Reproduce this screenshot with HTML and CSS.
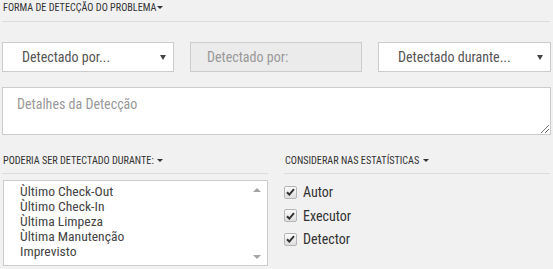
FILE: index.html
```html
<!DOCTYPE html>
<html lang="pt">
<head>
<meta charset="utf-8">
<link rel="stylesheet" href="styles.css">
</head>
<body>
<div class="page">
  <div class="section-title">FORMA DE DETECÇÃO DO PROBLEMA<span class="caret"></span></div>
  <div class="rule"></div>
  <div class="row3">
    <div class="select"><span>Detectado por...</span><span class="arrow"></span></div>
    <div class="input disabled">Detectado por:</div>
    <div class="select"><span>Detectado durante...</span><span class="arrow"></span></div>
  </div>
  <div class="textarea">
    <span class="placeholder">Detalhes da Detecção</span>
    <svg class="grip" width="9" height="9" viewBox="0 0 9 9"><g fill="#777"><rect x="8" y="1" width="1" height="1"/><rect x="7" y="2" width="1" height="1"/><rect x="6" y="3" width="1" height="1"/><rect x="5" y="4" width="1" height="1"/><rect x="4" y="5" width="1" height="1"/><rect x="3" y="6" width="1" height="1"/><rect x="2" y="7" width="1" height="1"/><rect x="1" y="8" width="1" height="1"/><rect x="8" y="5" width="1" height="1"/><rect x="7" y="6" width="1" height="1"/><rect x="6" y="7" width="1" height="1"/><rect x="5" y="8" width="1" height="1"/></g></svg>
  </div>
  <div class="row2">
    <div class="col">
      <div class="section-title">PODERIA SER DETECTADO DURANTE: <span class="caret"></span></div>
      <div class="rule"></div>
      <div class="listbox">
        <div class="item">Ùltimo Check-Out</div>
        <div class="item">Ùltimo Check-In</div>
        <div class="item">Ùltima Limpeza</div>
        <div class="item">Ùltima Manutenção</div>
        <div class="item">Imprevisto</div>
        <span class="sb-up"></span>
        <span class="sb-down"></span>
      </div>
    </div>
    <div class="col">
      <div class="section-title">CONSIDERAR NAS ESTATÍSTICAS <span class="caret"></span></div>
      <div class="rule"></div>
      <div class="checks">
        <label class="check"><span class="box"><svg width="9" height="8" viewBox="0 0 9 8"><path d="M1 4.2 L3.3 6.6 L8 1.2" fill="none" stroke="#333" stroke-width="2"/></svg></span>Autor</label>
        <label class="check"><span class="box"><svg width="9" height="8" viewBox="0 0 9 8"><path d="M1 4.2 L3.3 6.6 L8 1.2" fill="none" stroke="#333" stroke-width="2"/></svg></span>Executor</label>
        <label class="check"><span class="box"><svg width="9" height="8" viewBox="0 0 9 8"><path d="M1 4.2 L3.3 6.6 L8 1.2" fill="none" stroke="#333" stroke-width="2"/></svg></span>Detector</label>
      </div>
    </div>
  </div>
</div>
</body>
</html>
```

FILE: styles.css
```css
* { box-sizing: border-box; }
html, body { margin: 0; padding: 0; background: #f1f1f1; }
body { font-family: "Roboto Condensed", Roboto, "Liberation Sans", Arial, sans-serif; color: #333; }
.page { width: 553px; height: 269px; padding: 3px 3px 0 2px; overflow: hidden; }
.section-title {
  font-size: 10.2px; line-height: 10px; color: #333;
  height: 10px; white-space: nowrap; padding-left: 1px;
}
.caret {
  display: inline-block; width: 0; height: 0; vertical-align: 2px; margin-left: 1px;
  border-left: 3px solid transparent; border-right: 3px solid transparent; border-top: 3px solid #333;
}
.rule { height: 1px; background: #dcdcdc; margin-top: 8px; }
.row3 {
  display: grid; grid-template-columns: 172px 172px 173px; column-gap: 16px;
  margin-top: 20px;
}
.select, .input {
  height: 30px; border: 1px solid #ccc; background: #fff; font-size: 14px; color: #555;
  display: flex; align-items: center;
}
.select { position: relative; padding-left: 19px; }
.select .arrow {
  position: absolute; right: 7px; top: 12px; width: 0; height: 0;
  border-left: 3px solid transparent; border-right: 3px solid transparent; border-top: 5px solid #444;
}
.input.disabled { background: #ebebeb; color: #999; padding-left: 16px; }
.textarea {
  position: relative; margin-top: 15px; height: 48px; width: 549px;
  border: 1px solid #ccc; background: #fff; padding: 6px 14px;
}
.placeholder { font-size: 14px; color: #999; }
.grip { position: absolute; right: 1px; bottom: 1px; }
.row2 { display: grid; grid-template-columns: 266px 266px; column-gap: 16px; margin-top: 21px; }
.row2 .rule { margin-top: 7px; }
.listbox {
  position: relative; margin-top: 6px; margin-left: 1px; height: 86px; border: 1px solid #ccc;
  background: #fff; padding: 3px 0 0 16px;
}
.item { font-size: 13.6px; line-height: 15px; color: #444; }
.sb-up, .sb-down {
  position: absolute; right: 6px; width: 0; height: 0;
  border-left: 4px solid transparent; border-right: 4px solid transparent;
}
.sb-up { top: 7px; border-bottom: 4px solid #a3a3a3; }
.sb-down { bottom: 6px; border-top: 4px solid #a3a3a3; }
.checks { padding-top: 11px; display: flex; flex-direction: column; gap: 9.5px; }
.check { display: flex; align-items: center; font-size: 14px; line-height: 14px; color: #333; }
.box {
  width: 13px; height: 13px; border: 1px solid #b5b5b5; border-radius: 2px; margin-right: 6px;
  background: linear-gradient(#fcfcfc, #dedede); display: flex; align-items: center; justify-content: center;
}
```
